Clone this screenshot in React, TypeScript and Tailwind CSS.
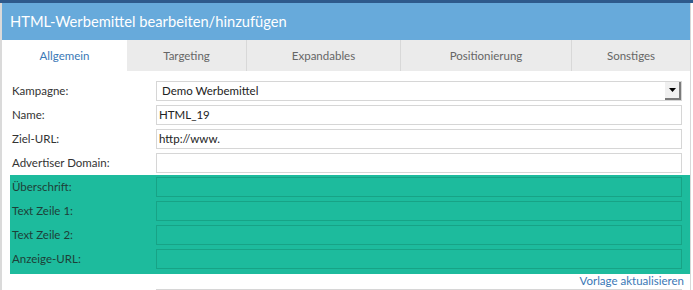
import * as React from "react";

const tabs = [
  { label: "Allgemein", w: "w-[125px]", active: true },
  { label: "Targeting", w: "w-[120px]" },
  { label: "Expandables", w: "w-[154px]" },
  { label: "Positionierung", w: "w-[171px]" },
  { label: "Sonstiges", w: "w-[118px]" },
];

const plainRows = [
  { label: "Name:", value: "HTML_19" },
  { label: "Ziel-URL:", value: "http://www." },
  { label: "Advertiser Domain:", value: "" },
];

const tealRows = ["Überschrift:", "Text Zeile 1:", "Text Zeile 2:", "Anzeige-URL:"];

function Row({ label, children, dark }: { label: string; children: React.ReactNode; dark?: boolean }) {
  return (
    <div className="flex h-[20px] shrink-0 items-center">
      <div className={"w-[146px] pl-[2px] text-[11.5px] leading-none " + (dark ? "text-[#1d3f38]" : "text-[#333]")}>
        {label}
      </div>
      {children}
    </div>
  );
}

export default function App() {
  return (
    <div className="w-[693px] h-[290px] overflow-hidden bg-white font-['Lato',_sans-serif]">
      <div className="h-[3px] bg-[#2e5a8c]" />
      <div className="flex h-[287px] overflow-hidden">
        <div className="w-[2px] shrink-0 bg-[#dadada]" />
        <div className="w-[688px] shrink-0 flex flex-col">
          <div className="h-[37px] shrink-0 bg-[#67aadb] flex items-center pl-[8px] text-white text-[14.7px]">
            HTML-Werbemittel bearbeiten/hinzufügen
          </div>
          <div className="flex h-[31px] shrink-0">
            {tabs.map((t, i) => (
              <div
                key={t.label}
                className={
                  "flex items-center justify-center text-[11.5px] " +
                  t.w +
                  " " +
                  (t.active
                    ? "bg-white text-[#3a78b6]"
                    : "bg-[#ebebeb] text-[#666] " + (i < tabs.length - 1 ? "border-r border-[#d8d8d8]" : ""))
                }
              >
                {t.label}
              </div>
            ))}
          </div>
          <div className="pl-[8px] pt-[10px] flex flex-col shrink-0">
            <div className="flex flex-col gap-[4px]">
              <Row label="Kampagne:">
                <div className="w-[526px] h-[20px] border border-[#d6d6d6] flex items-center justify-between pl-[5px] text-[11.5px] text-[#222]">
                  <span>Demo Werbemittel</span>
                  <div className="w-[16px] h-[18px] bg-[#f0f0f0] border-r-2 border-b-2 border-[#7a7a7a] flex items-center justify-center">
                    <svg width="7" height="4" viewBox="0 0 7 4">
                      <path d="M0 0H7L3.5 4Z" fill="#000" />
                    </svg>
                  </div>
                </div>
              </Row>
              {plainRows.map((r) => (
                <Row key={r.label} label={r.label}>
                  <div className="w-[526px] h-[20px] border border-[#d6d6d6] flex items-center pl-[2px] text-[11.5px] text-[#222]">
                    {r.value}
                  </div>
                </Row>
              ))}
            </div>
            <div className="mt-[2px] w-[680px] bg-[#1dbb9d] pt-[2px] pb-[5px] flex flex-col gap-[4px]">
              {tealRows.map((l) => (
                <Row key={l} label={l} dark>
                  <div className="w-[526px] h-[20px] border border-[#17a386]" />
                </Row>
              ))}
            </div>
            <div className="w-[674px] h-[15px] shrink-0 text-right text-[11.5px] leading-[14px] text-[#3a78b6]">Vorlage aktualisieren</div>
            <div className="ml-[146px] w-[526px] h-[20px] shrink-0 border border-[#d6d6d6]" />
          </div>
        </div>
        <div className="w-[3px] shrink-0 border-l border-[#d8d8d8] bg-white" />
      </div>
    </div>
  );
}
